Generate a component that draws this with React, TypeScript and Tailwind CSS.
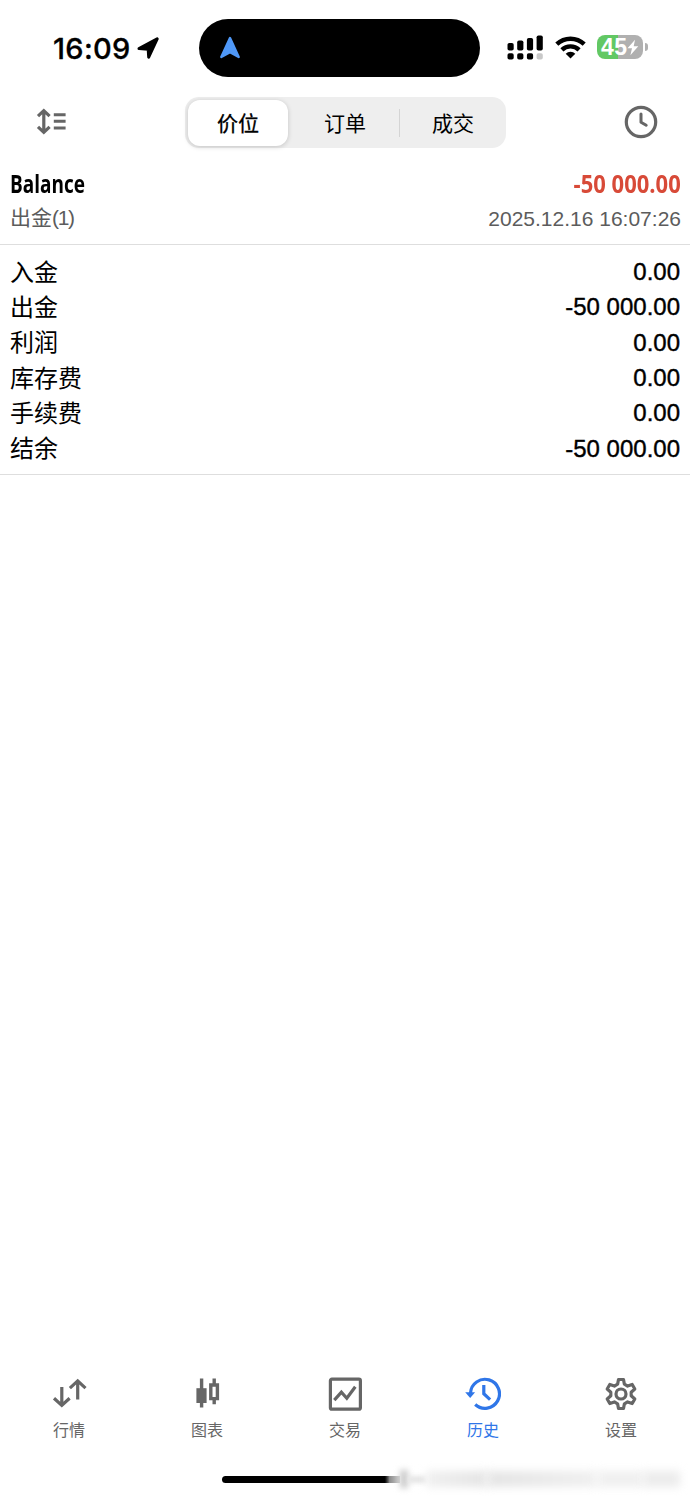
import type { ReactNode } from "react";

const SUMMARY = [
  { label: "入金", value: "0.00" },
  { label: "出金", value: "-50 000.00" },
  { label: "利润", value: "0.00" },
  { label: "库存费", value: "0.00" },
  { label: "手续费", value: "0.00" },
  { label: "结余", value: "-50 000.00" },
];

function StatusBar() {
  return (
    <header className="flex h-[97px] items-start pt-[19px]">
      <div className="flex h-[58px] w-[199px] items-center pl-[53px]">
        <span className="w-[83px] font-['Inter'] text-[29px] leading-none font-medium tracking-[0.3px] [-webkit-text-stroke:0.3px_#000]">
          16:09
        </span>
        <svg width="24" height="23" viewBox="0 0 24 23">
          <path d="M21.2 1.9 12.7 20.2 12.2 12.2 3 11.6Z" fill="#000" stroke="#000" strokeWidth="3" strokeLinejoin="round" />
        </svg>
      </div>
      <div className="flex h-[58px] w-[281px] items-center rounded-full bg-black pl-[20px]">
        <svg width="22" height="24" viewBox="0 0 22 24">
          <path d="M11 2 19.7 21 11 16.2 2.3 21Z" fill="#4f98f7" stroke="#4f98f7" strokeWidth="2.4" strokeLinejoin="round" />
        </svg>
      </div>
      <div className="flex h-[58px] items-center pl-[27px]">
        <svg className="-mt-px" width="36" height="25" viewBox="0 0 36 25">
          <rect x="0.5" y="8" width="6.2" height="7.5" rx="1.8" />
          <rect x="10.2" y="5.5" width="6.2" height="10" rx="1.8" />
          <rect x="19.9" y="3" width="6.2" height="12.5" rx="1.8" />
          <rect x="29.6" y="0.5" width="6.2" height="15" rx="1.8" />
          <rect x="0.5" y="18.3" width="6.2" height="6.2" rx="1.8" />
          <rect x="10.2" y="18.3" width="6.2" height="6.2" rx="1.8" />
          <rect x="19.9" y="18.3" width="6.2" height="6.2" rx="1.8" />
          <rect x="29.6" y="18.3" width="6.2" height="6.2" rx="1.8" fill="#c8c8c8" />
        </svg>
        <svg className="-mt-[2px] ml-3" width="31" height="23" viewBox="0 0 31 23">
          <g fill="none" stroke="#000" strokeWidth="4.4">
            <path d="M1.8 8.2a19.8 19.8 0 0 1 27.4 0" />
            <path d="M6.9 13.8a12.4 12.4 0 0 1 17.2 0" />
          </g>
          <path d="M15.5 22.5 10.7 17.7a6.8 6.8 0 0 1 9.6 0Z" />
        </svg>
        <div className="-mt-[2px] ml-[11px] flex h-6 w-[46px] items-center rounded-lg bg-linear-to-r from-[#62c864] from-45% to-[#b0b0b0] to-45% pl-[4px]">
          <span className="text-[23px] leading-none font-bold tracking-[0.4px] text-white">45</span>
          <svg width="12" height="17" viewBox="0 0 12 17">
            <path d="M8 0.8 0.5 9.3H5L3.4 16.2 11.3 7.2H6.7Z" fill="#fff" />
          </svg>
        </div>
        <div className="-mt-[2px] ml-[2px] h-2 w-[3px] rounded-r-full bg-[#b0b0b0]" />
      </div>
    </header>
  );
}

function Toolbar() {
  return (
    <div className="flex h-[68px] items-start">
      <div className="w-[185px] pt-[11px] pl-[36px]">
        <svg width="31" height="27" viewBox="0 0 31 27" fill="none" stroke="#666" strokeWidth="3.2">
          <path d="M7.8 2.5v22M2 8.2 7.8 2.6l5.8 5.6M2 18.8l5.8 5.6 5.8-5.6" />
          <path d="M17.8 6.7h11.8M17.8 13.3h11.8M17.8 20h11.8" strokeWidth="3" />
        </svg>
      </div>
      <div className="flex h-[51px] w-[321px] items-center rounded-[14px] bg-[#eeeeee] p-[3px] text-[21px]">
        <div className="flex h-[46px] w-[100px] items-center justify-center rounded-[12px] bg-white pt-[2px] shadow-[0_1px_5px_rgba(0,0,0,0.18)] [-webkit-text-stroke:0.3px_#000]">
          价位
        </div>
        <div className="flex w-[111px] justify-center pt-[2px] pl-[3px]">订单</div>
        <div className="h-[28px] w-px bg-[#d4d4d4]" />
        <div className="flex flex-1 justify-center pt-[2px] pl-[3px]">成交</div>
      </div>
      <svg className="mt-[8px] ml-[118px]" width="34" height="34" viewBox="0 0 34 34" fill="none" stroke="#666" strokeLinecap="round" strokeLinejoin="round">
        <circle cx="17" cy="17" r="14.7" strokeWidth="3.2" />
        <path d="M17 9v8.2l5.2 3" strokeWidth="3" />
      </svg>
    </div>
  );
}

function Deal() {
  return (
    <section className="h-[80px] border-b border-[#dedede] pr-[9px] pl-[10px]">
      <div className="flex h-[37px] items-center justify-between font-['Open_Sans'] text-[25px] leading-none">
        <span className="origin-left scale-x-[0.76] pb-px font-bold">Balance</span>
        <span className="origin-right scale-x-[0.88] font-bold text-[#d84a38]">-50 000.00</span>
      </div>
      <div className="flex h-[31px] items-center justify-between text-[21px] leading-none text-[#5c5c5c]">
        <span>
          出金<span className="tracking-[-1.3px]">(1)</span>
        </span>
        <span className="pt-[2px]">2025.12.16 16:07:26</span>
      </div>
    </section>
  );
}

function Summary() {
  return (
    <section className="h-[230px] border-b border-[#dedede] pr-[10px] pl-[10px] pt-[10px] text-[24px] leading-none">
      {SUMMARY.map((row) => (
        <div key={row.label} className="flex h-[35.3px] items-center justify-between">
          <span>{row.label}</span>
          <span className="pb-px [-webkit-text-stroke:0.4px_#000]">{row.value}</span>
        </div>
      ))}
    </section>
  );
}

function Tab({ label, active, children }: { label: string; active?: boolean; children: ReactNode }) {
  return (
    <div className={`flex flex-1 flex-col items-center ${active ? "text-[#2f76e8]" : "text-[#666]"}`}>
      <svg width="36" height="36" viewBox="0 0 36 36" fill="none" stroke="currentColor" strokeWidth="3.2">
        {children}
      </svg>
      <span className="mt-[11px] text-[16px] leading-none">{label}</span>
    </div>
  );
}

function TabBar() {
  return (
    <nav className="flex h-[93px]">
      <Tab label="行情">
        <path d="M10.8 11v18.5M3 22.2l7.8 7.2 7.8-7.2M26.7 23.5V5M18.9 12.1l7.8-7.2 7.8 7.2" />
      </Tab>
      <Tab label="图表">
        <path d="M12.6 2.5v29M25.2 2.5v25.8" strokeWidth="3.4" />
        <path d="M7.4 12.2h10.2v14.8H7.4z" fill="currentColor" stroke="none" />
        <path d="M21.8 9h6.6v13.6h-6.6z" fill="#fff" strokeWidth="3.4" />
      </Tab>
      <Tab label="交易">
        <rect x="3.4" y="3.2" width="30" height="30" rx="1.5" />
        <path d="M7.3 24.1 14.4 16.2l5.4 6L28.3 10.8" />
      </Tab>
      <Tab label="历史" active>
        <path d="M5.5 17A14.5 14.5 0 1 1 10.2 28.5" />
        <path d="M0.2 16.2h9.9L5.2 22Z" fill="currentColor" stroke="none" />
        <path d="M18.8 9v8.7l6.3 6" />
      </Tab>
      <Tab label="设置">
        <path
          strokeLinejoin="round"
          d="M15.5 3.5h5l.9 4.7 3.2 1.9 4.6-1.6 2.6 4.5-3.6 3.2v3.6l3.6 3.2-2.6 4.5-4.6-1.6-3.2 1.9-.9 4.7h-5l-.9-4.7-3.2-1.9-4.6 1.6-2.6-4.5 3.6-3.2v-3.6L4.2 13l2.6-4.5 4.6 1.6 3.2-1.9z"
        />
        <circle cx="18" cy="18" r="5" />
      </Tab>
    </nav>
  );
}

function HomeIndicator() {
  return (
    <div className="flex h-[20px] items-center pl-[222px]">
      <div className="h-[7px] w-[167px] rounded-l-full bg-linear-to-r from-black from-97% to-[#777]" />
      <div className="h-[7px] w-[11px] bg-linear-to-r from-[#888] to-[#d0d0d0]" />
      <div className="h-[18px] w-[8px] bg-[#c9c9c9] blur-[3px]" />
      <div className="h-[7px] w-[18px] bg-[#e6e6e6] blur-[2px]" />
      <div className="h-[16px] w-[61px] bg-linear-to-r from-[#f0f0f0] to-[#e5e5e5] blur-[4px]" />
      <div className="h-[16px] w-[110px] bg-linear-to-r from-[#e5e5e5] to-[#f0f0f0] blur-[4px]" />
      <div className="h-[16px] w-[46px] bg-[#f0f0f0] blur-[4px]" />
      <div className="h-[16px] w-[37px] bg-[#ececec] blur-[4px]" />
    </div>
  );
}

export default function App() {
  return (
    <div className="flex h-[1496px] w-[690px] flex-col overflow-hidden bg-white font-['Liberation_Sans','Noto_Sans_CJK_SC',sans-serif] text-black">
      <StatusBar />
      <Toolbar />
      <Deal />
      <Summary />
      <main className="flex-1" />
      <TabBar />
      <HomeIndicator />
      <div className="h-[7px]" />
    </div>
  );
}
